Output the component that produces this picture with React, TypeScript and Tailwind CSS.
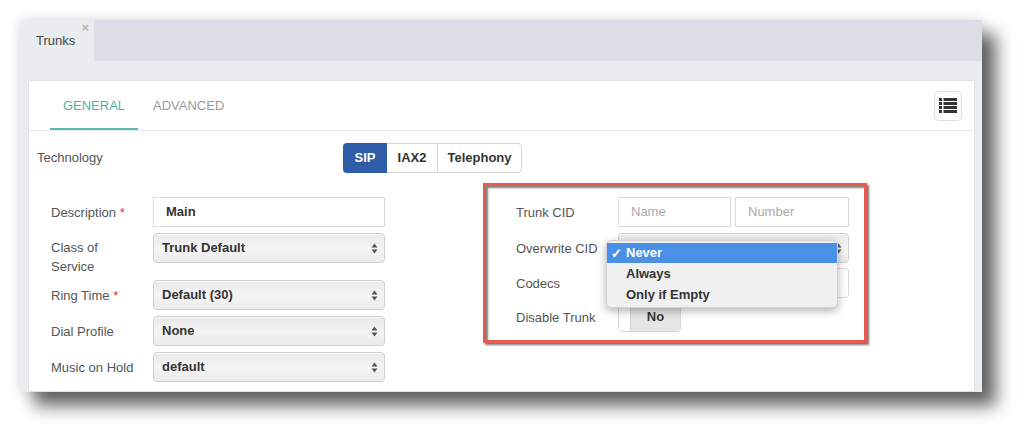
import React from 'react'

const font = { fontFamily: '"Liberation Sans", Arial, sans-serif' }

function Arrows() {
  return (
    <svg width="7" height="11" viewBox="0 0 7 11" className="shrink-0">
      <path d="M3.5 0.5 L6.5 4.5 L0.5 4.5 Z" fill="#555" />
      <path d="M3.5 10.5 L6.5 6.5 L0.5 6.5 Z" fill="#555" />
    </svg>
  )
}

function Select({ value, className = '' }: { value: string; className?: string }) {
  return (
    <div
      className={`flex h-[30px] items-center justify-between rounded-[4px] border border-[#cfcfcf] bg-gradient-to-b from-[#e9e9e9] via-[#f4f4f4] to-[#ececec] pl-[8px] pr-[6px] text-[13px] font-bold text-[#333] shadow-[inset_0_1px_1px_rgba(255,255,255,0.8)] ${className}`}
    >
      <span>{value}</span>
      <Arrows />
    </div>
  )
}

function TextInput({ value, placeholder, className = '' }: { value?: string; placeholder?: string; className?: string }) {
  return (
    <div className={`flex h-[30px] items-center border border-[#dcdcdc] bg-white px-[12px] text-[13px] ${className}`}>
      {value ? <span className="font-bold text-[#333]">{value}</span> : <span className="text-[#aaa]">{placeholder}</span>}
    </div>
  )
}

function Label({ children, required }: { children: React.ReactNode; required?: boolean }) {
  return (
    <div className="w-[102px] shrink-0 text-[13px] leading-[19px] text-[#555]">
      {children}
      {required ? <span className="text-[#e0342b]"> *</span> : null}
    </div>
  )
}

function ListIcon() {
  return (
    <svg width="18" height="16" viewBox="0 0 18 16">
      {[0, 4, 8, 12].map((y) => (
        <g key={y}>
          <rect x="0" y={y} width="3" height="3" fill="#333" />
          <rect x="4.5" y={y} width="13.5" height="3" fill="#333" />
        </g>
      ))}
    </svg>
  )
}

export default function App() {
  return (
    <div className="h-[434px] w-[1024px] overflow-hidden bg-white pl-[20px] pt-[20px]" style={font}>
      <div className="flex h-[372px] w-[962px] flex-col overflow-hidden bg-[#e9edf0] shadow-[14px_14px_16px_rgba(0,0,0,0.6),0_0_12px_rgba(0,0,0,0.14)]">
        {/* tab strip */}
        <div className="flex h-[41px] shrink-0 bg-[#dcdfe7]">
          <div className="relative flex w-[74px] items-center bg-[#e9edf0] pl-[16px] text-[13px] text-[#444]">
            Trunks
            <span className="absolute right-[5px] top-[0px] text-[13px] font-bold leading-[16px] text-[#b3b3b3]">×</span>
          </div>
        </div>

        <div className="flex-1 pl-[8px] pr-[7px] pt-[19px]">
          <div className="h-full rounded-t-[2px] border border-[#e0e4e8] bg-white">
            {/* header */}
            <div className="flex h-[50px] items-stretch justify-between border-b border-[#e6e9ed] pl-[21px] pr-[12px]">
              <div className="flex text-[13px]">
                <div className="flex w-[88px] items-center justify-center border-b-2 border-[#5cb8a8] pt-[2px] text-[#4fb3a1]">
                  GENERAL
                </div>
                <div className="flex items-center pl-[15px] text-[#9a9a9a]">ADVANCED</div>
              </div>
              <div className="flex items-center">
                <div className="flex h-[30px] w-[28px] items-center justify-center rounded-[4px] border border-[#dedede] bg-white">
                  <ListIcon />
                </div>
              </div>
            </div>

            {/* technology */}
            <div className="flex items-center pl-[8px] pt-[12px]">
              <div className="w-[306px] text-[13px] text-[#555]">Technology</div>
              <div className="flex h-[30px] text-[13px] font-bold">
                <div className="flex w-[44px] items-center justify-center rounded-l-[4px] bg-[#2e5ca6] text-white">SIP</div>
                <div className="flex w-[50px] items-center justify-center border-y border-[#d6d6d6] bg-white text-[#333]">IAX2</div>
                <div className="flex w-[85px] items-center justify-center rounded-r-[4px] border border-[#d6d6d6] bg-white text-[#333]">Telephony</div>
              </div>
            </div>

            <div className="flex pt-[10px]">
              {/* left column */}
              <div className="flex w-[357px] flex-col pl-[22px] pt-[14px]">
                <div className="flex items-center">
                  <Label required>Description</Label>
                  <TextInput value="Main" className="w-[232px]" />
                </div>
                <div className="mt-[5px] flex items-start">
                  <div className="pt-[6px]">
                    <Label>
                      Class of
                      <br />
                      Service
                    </Label>
                  </div>
                  <Select value="Trunk Default" className="mt-[1px] w-[232px]" />
                </div>
                <div className="mt-[4px] flex items-center">
                  <Label required>Ring Time</Label>
                  <Select value="Default (30)" className="w-[232px]" />
                </div>
                <div className="mt-[6px] flex items-center">
                  <Label>Dial Profile</Label>
                  <Select value="None" className="w-[232px]" />
                </div>
                <div className="mt-[6px] flex items-center">
                  <Label>Music on Hold</Label>
                  <Select value="default" className="w-[232px]" />
                </div>
              </div>

              {/* right column, annotated */}
              <div className="ml-[97px]">
                <div className="relative h-[160px] w-[384px] border-[3px] border-[#e8594e] pl-[30px] pt-[11px] shadow-[2px_2px_2px_rgba(0,0,0,0.55),inset_2px_2px_2px_rgba(0,0,0,0.5)]">
                  <div className="flex items-center">
                    <Label>Trunk CID</Label>
                    <TextInput placeholder="Name" className="w-[113px]" />
                    <TextInput placeholder="Number" className="ml-[4px] w-[114px]" />
                  </div>
                  <div className="mt-[6px] flex items-center">
                    <Label>Overwrite CID</Label>
                    <Select value="" className="w-[231px]" />
                  </div>
                  <div className="mt-[5px] flex items-center">
                    <Label>Codecs</Label>
                    <TextInput value="" className="w-[231px] rounded-[3px]" />
                  </div>
                  <div className="mt-[4px] flex items-center">
                    <Label>Disable Trunk</Label>
                    <div className="flex h-[30px] w-[63px] overflow-hidden rounded-[4px] border border-[#d6d6d6]">
                      <div className="w-[11px] bg-white" />
                      <div className="flex flex-1 items-center justify-center border-l border-[#d0d0d0] bg-[#e6e6e6] text-[13px] font-bold text-[#333]">
                        No
                      </div>
                    </div>
                  </div>

                  {/* open native dropdown */}
                  <div className="absolute left-[120px] top-[54px] w-[232px] rounded-[5px] border border-[#d2d2d2] bg-[#f0f0f0] py-[2px] text-[13px] font-bold text-[#333] shadow-[0_3px_8px_rgba(0,0,0,0.3)]">
                    <div className="flex h-[20px] items-center bg-[#4a90e6] pl-[4px] text-white">
                      <span className="w-[15px] text-[13px] leading-none">✓</span>
                      <span>Never</span>
                    </div>
                    <div className="flex h-[21px] items-center pl-[19px]">Always</div>
                    <div className="flex h-[21px] items-center pl-[19px]">Only if Empty</div>
                  </div>
                </div>
              </div>
            </div>
          </div>
        </div>
      </div>
    </div>
  )
}
